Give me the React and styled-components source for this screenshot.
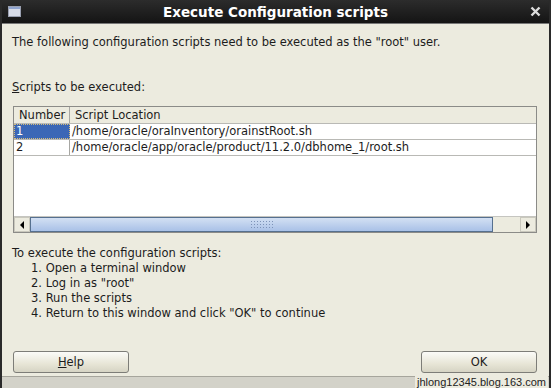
import React from "react";
import styled, { createGlobalStyle } from "styled-components";

const Global = createGlobalStyle`
  html, body { margin: 0; padding: 0; background: #ecebdf; }
  * { box-sizing: border-box; }
`;

const Win = styled.div`
  width: 551px;
  height: 388px;
  display: flex;
  flex-direction: column;
  background: #ecebdf;
  font-family: "DejaVu Sans", sans-serif;
  font-size: 11.5px;
  color: #1c1c1c;
  border-left: 2px solid #2a2a2a;
  border-right: 2px solid #2a2a2a;
  overflow: hidden;
`;

const TitleBar = styled.div`
  height: 24px;
  flex: none;
  display: flex;
  align-items: center;
  justify-content: space-between;
  padding: 0 10px 0 8px;
  background: linear-gradient(#2c2c2c, #141414);
  border-bottom: 1px solid #777;
  margin: 0 -2px;
`;

const Title = styled.div`
  color: #fff;
  font-weight: bold;
  font-size: 13.5px;
  flex: 1;
  text-align: center;
`;

const Body = styled.div`
  flex: 1;
  display: flex;
  flex-direction: column;
  padding: 11px 12px 0 10px;
`;

const Line = styled.div`
  line-height: 15px;
  height: 15px;
  white-space: nowrap;
  margin-top: ${(p) => p.$mt || 0}px;
  padding-left: ${(p) => p.$indent || 0}px;
`;

const Table = styled.div`
  margin: 11px 0 0 1px;
  height: 127px;
  border: 1px solid #8b8b88;
  background: #ffffff;
  display: flex;
  flex-direction: column;
`;

const Row = styled.div`
  display: flex;
  height: ${(p) => (p.$header ? 17 : 16)}px;
  border-bottom: 1px solid #b9b9b5;
  background: ${(p) => (p.$header ? "#ecebdf" : "#ffffff")};
  line-height: ${(p) => (p.$header ? 16 : 15)}px;
`;

const NumCell = styled.div`
  width: 56px;
  flex: none;
  padding-left: ${(p) => (p.$header ? 5 : 2)}px;
  border-right: 1px solid #a7a7a3;
  white-space: nowrap;
`;

const SelectedCell = styled(NumCell)`
  background-color: #3b67b6;
  color: #ffffff;
  border: 1px dotted #d6be7a;
  padding-left: 1px;
  line-height: 13px;
`;

const LocCell = styled.div`
  flex: 1;
  padding-left: ${(p) => (p.$header ? 5 : 2)}px;
  white-space: nowrap;
`;

const Spacer = styled.div`
  flex: 1;
`;

const HScroll = styled.div`
  height: 16px;
  display: flex;
  border-top: 1px solid #c5c5c0;
  background: #ecebdf;
`;

const ArrowBtn = styled.div`
  width: 16px;
  display: flex;
  align-items: center;
  justify-content: center;
  background: #ecebdf;
  border: 1px solid #c9c8bd;
`;

const Thumb = styled.div`
  flex: 1;
  display: flex;
  align-items: center;
  justify-content: center;
  background: linear-gradient(#d3e0f3, #a9c1e7);
  border: 1px solid #56708f;
`;

const Track = styled.div`
  width: 27px;
  background: #ecebdf;
`;

const Grip = styled.div`
  width: 24px;
  height: 10px;
  background-image: radial-gradient(circle, #7d93b8 0.7px, transparent 1px);
  background-size: 3px 3px;
`;

const Buttons = styled.div`
  margin-top: auto;
  margin-bottom: 3px;
  padding-left: 1px;
  display: flex;
  justify-content: space-between;
`;

const Button = styled.div`
  width: 116px;
  height: 22px;
  border: 1px solid #7d7d78;
  border-radius: 3px;
  background: linear-gradient(#fbfbf8, #e7e5d6 60%, #d6d4c4);
  display: flex;
  align-items: center;
  justify-content: center;
`;

const Footer = styled.div`
  height: 12px;
  flex: none;
  background: #d3d2c9;
  border-top: 1px solid #a6a59c;
  display: flex;
  justify-content: flex-end;
  align-items: flex-end;
  padding-right: 3px;
  margin: 0 -2px;
`;

const Watermark = styled.div`
  font-family: "Liberation Sans", sans-serif;
  font-size: 11px;
  color: #222;
  background: #ecebdf;
  line-height: 12px;
  padding: 0 2px;
`;

const U = styled.span`
  text-decoration: underline;
`;

const WinIcon = () => (
  <svg width="13" height="11" viewBox="0 0 13 11">
    <rect x="0.5" y="0.5" width="12" height="10" fill="#d8dce8" stroke="#9aa0b0" />
    <rect x="1" y="1" width="11" height="2" fill="#8fa4cf" />
  </svg>
);

const CloseIcon = () => (
  <svg width="11" height="11" viewBox="0 0 11 11">
    <path d="M1.5 1.5 L9.5 9.5 M9.5 1.5 L1.5 9.5" stroke="#ddd" strokeWidth="2.4" />
  </svg>
);

const Arrow = ({ dir }) => (
  <svg width="6" height="8" viewBox="0 0 6 8">
    {dir === "left" ? <path d="M5 0 L1 4 L5 8 Z" fill="#000" /> : <path d="M1 0 L5 4 L1 8 Z" fill="#000" />}
  </svg>
);

export default function App() {
  return (
    <>
      <Global />
      <Win>
        <TitleBar>
          <WinIcon />
          <Title>Execute Configuration scripts</Title>
          <CloseIcon />
        </TitleBar>
        <Body>
          <Line>The following configuration scripts need to be executed as the "root" user.</Line>
          <Line $mt={30}>
            <U>S</U>cripts to be executed:
          </Line>
          <Table>
            <Row $header>
              <NumCell $header>Number</NumCell>
              <LocCell $header>Script Location</LocCell>
            </Row>
            <Row>
              <SelectedCell>1</SelectedCell>
              <LocCell>/home/oracle/oraInventory/orainstRoot.sh</LocCell>
            </Row>
            <Row>
              <NumCell>2</NumCell>
              <LocCell>/home/oracle/app/oracle/product/11.2.0/dbhome_1/root.sh</LocCell>
            </Row>
            <Spacer />
            <HScroll>
              <ArrowBtn><Arrow dir="left" /></ArrowBtn>
              <Thumb><Grip /></Thumb>
              <Track />
              <ArrowBtn><Arrow dir="right" /></ArrowBtn>
            </HScroll>
          </Table>
          <Line $mt={13}>To execute the configuration scripts:</Line>
          <Line $indent={19}>1. Open a terminal window</Line>
          <Line $indent={19}>2. Log in as "root"</Line>
          <Line $indent={19}>3. Run the scripts</Line>
          <Line $indent={19}>4. Return to this window and click "OK" to continue</Line>
          <Buttons>
            <Button><U>H</U>elp</Button>
            <Button>OK</Button>
          </Buttons>
        </Body>
        <Footer>
          <Watermark>jhlong12345.blog.163.com</Watermark>
        </Footer>
      </Win>
    </>
  );
}
